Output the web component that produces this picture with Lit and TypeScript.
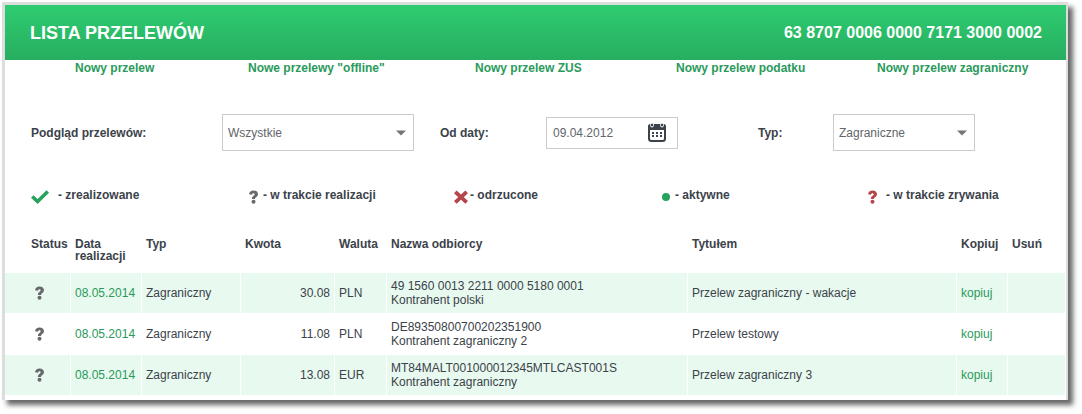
import { LitElement, html, svg, css } from "lit";
import { customElement } from "lit/decorators.js";

interface Transfer {
  date: string;
  type: string;
  amount: string;
  currency: string;
  account: string;
  recipient: string;
  title: string;
}

const NAV = [
  "Nowy przelew",
  'Nowe przelewy "offline"',
  "Nowy przelew ZUS",
  "Nowy przelew podatku",
  "Nowy przelew zagraniczny",
];

const TRANSFERS: Transfer[] = [
  {
    date: "08.05.2014",
    type: "Zagraniczny",
    amount: "30.08",
    currency: "PLN",
    account: "49 1560 0013 2211 0000 5180 0001",
    recipient: "Kontrahent polski",
    title: "Przelew zagraniczny - wakacje",
  },
  {
    date: "08.05.2014",
    type: "Zagraniczny",
    amount: "11.08",
    currency: "PLN",
    account: "DE89350800700202351900",
    recipient: "Kontrahent zagraniczny 2",
    title: "Przelew testowy",
  },
  {
    date: "08.05.2014",
    type: "Zagraniczny",
    amount: "13.08",
    currency: "EUR",
    account: "MT84MALT001000012345MTLCAST001S",
    recipient: "Kontrahent zagraniczny",
    title: "Przelew zagraniczny 3",
  },
];

const question = (color: string) => html`
  <svg width="9" height="14" viewBox="0 0 9 14" aria-hidden="true">
    <path
      d="M0 4.2C0.3 1.9 2 0.5 4.5 0.5C7.2 0.5 9 2 9 4.100C9 5.800 8 6.600 7 7.300C6.200 7.900 6 8.200 6 9H2.900C2.900 7.500 3.300 6.700 4.400 5.900C5.300 5.300 5.600 4.900 5.600 4.300C5.600 3.600 5.200 3.200 4.500 3.200C3.700 3.200 3.200 3.700 3 4.700Z"
      fill=${color}
    />
    <circle cx="4.500" cy="11.800" r="2" fill=${color} />
  </svg>
`;

const check = html`
  <svg width="18" height="14" viewBox="0 0 18 14" aria-hidden="true">
    <path d="M1.200 6.500L6.600 11.500L16.800 1.500" fill="none" stroke="#27a35d" stroke-width="3.600" />
  </svg>
`;

const cross = html`
  <svg width="14" height="14" viewBox="0 0 14 14" aria-hidden="true">
    <path d="M1.300 1.800L12.700 12.400M12.700 1.800L1.300 12.400" stroke="#b5444b" stroke-width="3.800" />
  </svg>
`;

const dot = html`
  <svg width="8" height="8" viewBox="0 0 8 8" aria-hidden="true">
    <circle cx="4" cy="4" r="4" fill="#27a35d" />
  </svg>
`;

const caret = html`
  <svg class="caret" width="10" height="6" viewBox="0 0 10 6" aria-hidden="true">
    <path d="M0 0.500H10L5 5.500Z" fill="#737679" />
  </svg>
`;

const calendar = html`
  <svg width="18" height="19" viewBox="0 0 18 19" aria-hidden="true">
    <rect x="1" y="2" width="16" height="16" rx="2.500" fill="#fff" stroke="#3b424a" stroke-width="2" />
    <path d="M0 7V3.500Q0 1 2.500 1H15.500Q18 1 18 3.500V7Z" fill="#3b424a" />
    <rect x="2.500" y="0" width="3" height="4" rx="1.500" fill="#3b424a" stroke="#fff" />
    <rect x="12.500" y="0" width="3" height="4" rx="1.500" fill="#3b424a" stroke="#fff" />
    ${[4, 8, 12].map((x) =>
      [9, 12].map((y) => svg`<rect x=${x} y=${y} width="2" height="2" fill="#3b424a" />`)
    )}
  </svg>
`;

@customElement("app-root")
export class AppRoot extends LitElement {
  static styles = css`
    :host {
      display: block;
      padding: 2px 14px 14px 2px;
      background: #fff;
      color: #3b424a;
      font: 12px/14px "Liberation Sans", Arial, sans-serif;
    }
    .panel {
      border: solid #dcdedd;
      border-width: 3px 2px 0 3px;
      background: #fff;
      box-shadow: 5px 5px 5px rgba(0, 0, 0, 0.6);
      padding-bottom: 5px;
    }
    .header {
      display: flex;
      align-items: center;
      justify-content: space-between;
      height: 55px;
      padding: 0 24px 0 25px;
      background: linear-gradient(#2ecc71, #27ae60);
      color: #fff;
    }
    .title {
      margin: 0;
      font-size: 18px;
      line-height: 20px;
    }
    .account {
      font-size: 16px;
      line-height: 20px;
      font-weight: bold;
    }
    a {
      color: #2a9a5b;
      text-decoration: none;
    }
    .nav {
      display: grid;
      grid-template-columns: 173fr 227fr 201fr 201fr 189fr;
      padding: 1px 0 0 70px;
      font-weight: bold;
    }
    .filters {
      display: grid;
      grid-template-columns: 191fr 192fr 26fr 106fr 132fr 80fr 75fr 142fr 91fr;
      align-items: center;
      padding: 39px 0 0 26px;
    }
    .filters label {
      font-weight: bold;
    }
    .label-date {
      grid-column: 4;
    }
    .label-type {
      grid-column: 7;
    }
    .select {
      display: grid;
      align-items: center;
    }
    .select > * {
      grid-area: 1 / 1;
    }
    select,
    input {
      font: inherit;
      color: #626569;
      min-width: 0;
    }
    select {
      appearance: none;
      width: 100%;
      height: 37px;
      padding: 0 24px 0 5px;
      border: 1px solid #cbcbcb;
      border-radius: 0;
      background: #fff;
    }
    .caret {
      justify-self: end;
      margin-right: 8px;
      pointer-events: none;
    }
    .date {
      display: flex;
      align-items: center;
      min-width: 0;
      height: 30px;
      padding: 0 11px 0 6px;
      border: 1px solid #cbcbcb;
    }
    .date input {
      flex: 1;
      width: 100%;
      padding: 0;
      border: 0;
      background: none;
    }
    .date button {
      display: flex;
      padding: 0;
      border: 0;
      background: none;
    }
    .legend {
      display: grid;
      grid-template-columns: 218fr 205fr 208fr 206fr 198fr;
      margin: 0;
      padding: 37px 0 0 26px;
      list-style: none;
      font-weight: bold;
    }
    .legend li {
      display: flex;
      gap: 5px;
    }
    .legend svg {
      margin-top: 2px;
    }
    .legend .wide {
      gap: 9px;
    }
    .legend .tight {
      gap: 2px;
    }
    .legend .bullet svg {
      margin-top: 5px;
    }
    table {
      width: 100%;
      margin-top: 34px;
      border-collapse: separate;
      border-spacing: 0;
      table-layout: fixed;
    }
    th {
      height: 35px;
      padding: 0 0 0 4px;
      box-sizing: border-box;
      line-height: 12px;
      text-align: left;
      vertical-align: top;
    }
    td {
      height: 41px;
      box-sizing: border-box;
      padding: 0 4px;
      border: solid #fff;
      border-width: 0 1px 1px 0;
    }
    tbody tr:nth-child(odd) td {
      background: #e8f9ef;
      background-clip: padding-box;
    }
    tbody tr:last-child td {
      border-bottom: 0;
      height: 40px;
    }
    th:first-child {
      padding-left: 26px;
    }
    .status {
      padding-left: 30px;
    }
    .status svg {
      display: block;
    }
    .amount {
      text-align: right;
    }
    .c-status { width: 66px; }
    .c-date { width: 71px; }
    .c-type { width: 99px; }
    .c-amount { width: 94px; }
    .c-currency { width: 52px; }
    .c-title { width: 269px; }
    .c-copy { width: 51px; }
    .c-delete { width: 58px; }
  `;

  render() {
    return html`
      <main class="panel">
        <header class="header">
          <h1 class="title">LISTA PRZELEWÓW</h1>
          <span class="account">63 8707 0006 0000 7171 3000 0002</span>
        </header>

        <nav class="nav">
          ${NAV.map((label) => html`<span><a href="#">${label}</a></span>`)}
        </nav>

        <form class="filters">
          <label for="view">Podgląd przelewów:</label>
          <div class="select">
            <select id="view"><option>Wszystkie</option></select>
            ${caret}
          </div>
          <label class="label-date" for="from">Od daty:</label>
          <div class="date">
            <input id="from" type="text" value="09.04.2012" />
            <button type="button" aria-label="Kalendarz">${calendar}</button>
          </div>
          <label class="label-type" for="type">Typ:</label>
          <div class="select">
            <select id="type"><option>Zagraniczne</option></select>
            ${caret}
          </div>
        </form>

        <ul class="legend">
          <li class="wide">${check}<span>- zrealizowane</span></li>
          <li>${question("#67696b")}<span>- w trakcie realizacji</span></li>
          <li class="tight">${cross}<span>- odrzucone</span></li>
          <li class="bullet">${dot}<span>- aktywne</span></li>
          <li class="wide">${question("#b5444b")}<span>- w trakcie zrywania</span></li>
        </ul>

        <table>
          <colgroup>
            <col class="c-status" />
            <col class="c-date" />
            <col class="c-type" />
            <col class="c-amount" />
            <col class="c-currency" />
            <col />
            <col class="c-title" />
            <col class="c-copy" />
            <col class="c-delete" />
          </colgroup>
          <thead>
            <tr>
              <th>Status</th>
              <th>Data realizacji</th>
              <th>Typ</th>
              <th>Kwota</th>
              <th>Waluta</th>
              <th>Nazwa odbiorcy</th>
              <th>Tytułem</th>
              <th>Kopiuj</th>
              <th>Usuń</th>
            </tr>
          </thead>
          <tbody>
            ${TRANSFERS.map(
              (t) => html`
                <tr>
                  <td class="status">${question("#67696b")}</td>
                  <td><a href="#">${t.date}</a></td>
                  <td>${t.type}</td>
                  <td class="amount">${t.amount}</td>
                  <td>${t.currency}</td>
                  <td>${t.account}<br />${t.recipient}</td>
                  <td>${t.title}</td>
                  <td><a href="#">kopiuj</a></td>
                  <td></td>
                </tr>
              `
            )}
          </tbody>
        </table>
      </main>
    `;
  }
}
